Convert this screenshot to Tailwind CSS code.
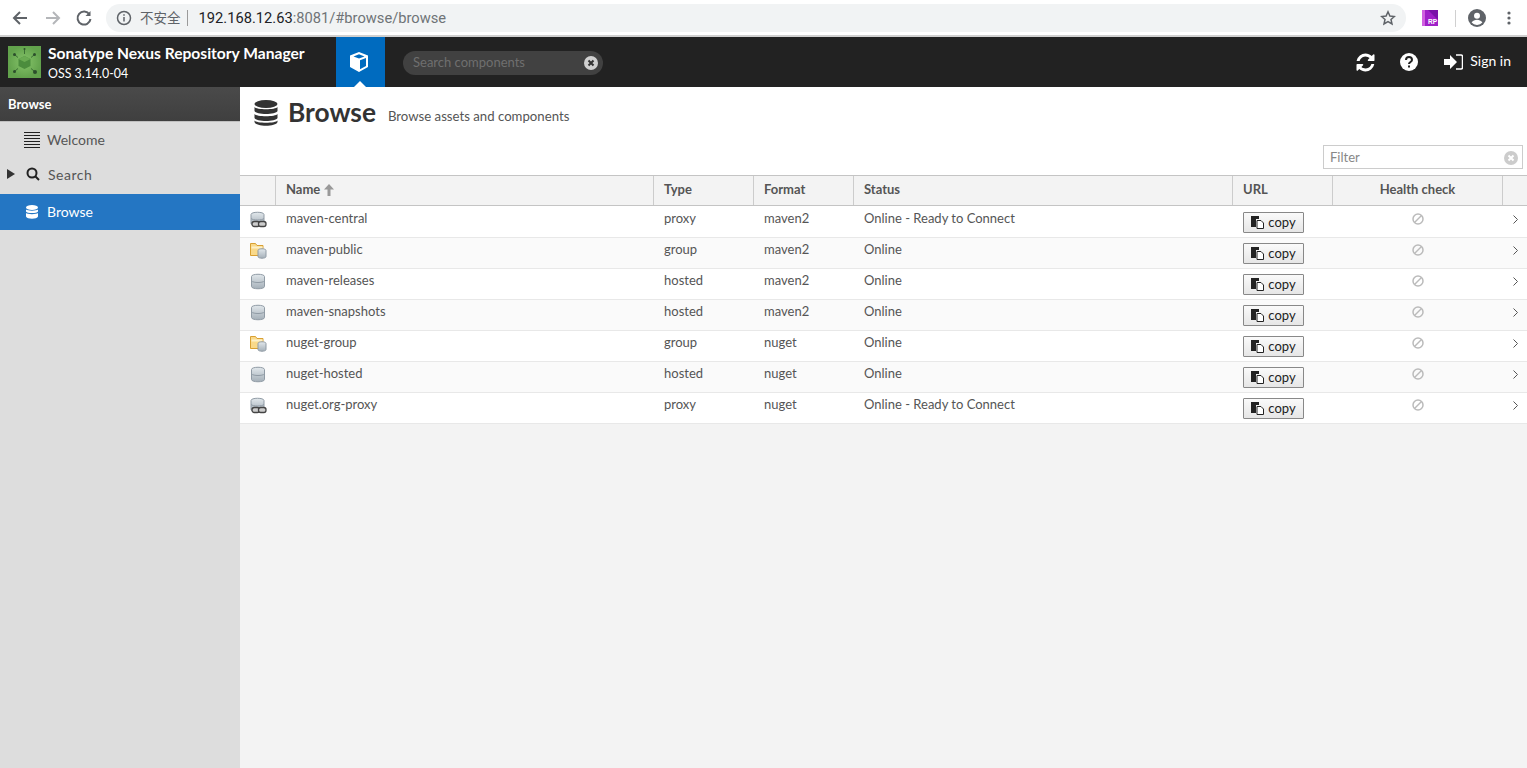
<!DOCTYPE html>
<html lang="en">
<head>
    <meta charset="UTF-8">
    <title>Browse - Nexus Repository Manager</title>
    <script src="https://cdn.jsdelivr.net/npm/@tailwindcss/browser@4"></script>
</head>
<body class="h-[768px] w-[1527px] overflow-hidden bg-[#f3f3f3] font-['Lato','Noto_Sans_CJK_SC',sans-serif] text-[13px] text-[#555]">

    <!-- browser toolbar -->
    <div class="flex h-[37px] items-center border-b-2 border-[#d0d0d0] bg-white pt-[1px]">
        <div class="flex w-[106px] items-center pl-[11px]">
            <svg class="h-[18px] w-[18px]" viewBox="0 0 18 18" fill="none" stroke="#5f6368" stroke-width="2"><path d="M16 9H3M9 3L3 9l6 6"/></svg>
            <svg class="ml-[15px] h-[18px] w-[18px]" viewBox="0 0 18 18" fill="none" stroke="#b4b6b9" stroke-width="2"><path d="M2 9h13M9 3l6 6-6 6"/></svg>
            <svg class="ml-[13px] h-[18px] w-[18px]" viewBox="0 0 18 18" fill="none" stroke="#5f6368" stroke-width="2"><path d="M14.5 5.5A6.5 6.5 0 1 0 15.5 10"/><path d="M15.5 2v5h-5" fill="#5f6368" stroke="none"/></svg>
        </div>
        <div class="flex h-[28px] w-[1300px] items-center rounded-full bg-[#f1f3f4] pl-[10px] pr-[10px] text-[14.7px]">
            <svg class="h-[16px] w-[16px]" viewBox="0 0 16 16" fill="none" stroke="#5f6368" stroke-width="1.5"><circle cx="8" cy="8" r="6.5"/><path d="M8 7v4.500M8 4.200v1.600"/></svg>
            <span class="ml-[8px] text-[13.5px] text-[#5f6368]">不安全</span>
            <span class="mx-[6px] h-[16px] w-px bg-[#9a9a9a]"></span>
            <span class="ml-[5px] font-['Roboto',sans-serif] text-[#202124]">192.168.12.63<span class="text-[#6f7377]">:8081/#browse/browse</span></span>
            <svg class="ml-auto h-[16px] w-[16px]" viewBox="0 0 16 16" fill="none" stroke="#5f6368" stroke-width="1.5"><path d="M8 1.800l1.900 4.200 4.500.5-3.400 3 1 4.500L8 11.700 4 14l1-4.500-3.400-3 4.500-.5z"/></svg>
        </div>
        <svg class="ml-[16px] h-[16px] w-[16px]" viewBox="0 0 16 16"><rect width="16" height="16" fill="#a020c8"/><rect width="3" height="16" fill="#d060e0"/><path d="M6 0h10v10z" fill="#7a12a8"/><text x="6" y="14" font-size="6.5" font-family="Liberation Sans" font-weight="bold" fill="#fff">RP</text></svg>
        <span class="ml-[17px] h-[17px] w-px bg-[#d0d0d0]"></span>
        <svg class="ml-[12px] h-[18px] w-[18px]" viewBox="0 0 18 18"><circle cx="9" cy="9" r="9" fill="#5f6368"/><circle cx="9" cy="6.800" r="3" fill="#fff"/><path d="M3.600 13.600c1.200-2 3.400-2.800 5.400-2.800s4.200.8 5.400 2.800A7 7 0 0 1 9 16a7 7 0 0 1-5.400-2.400z" fill="#fff"/></svg>
        <svg class="ml-[21px] h-[14px] w-[4px]" viewBox="0 0 4 14" fill="#5f6368"><circle cx="2" cy="2" r="1.600"/><circle cx="2" cy="7" r="1.600"/><circle cx="2" cy="12" r="1.600"/></svg>
    </div>

    <!-- nexus header -->
    <header class="flex h-[50px] items-center bg-[#222] text-white">
        <svg class="ml-[8px] h-[32px] w-[33px]" viewBox="0 0 33 32">
            <defs><radialGradient id="logoBg"><stop offset="0" stop-color="#86c46a"/><stop offset="1" stop-color="#62a24c"/></radialGradient></defs>
            <rect width="33" height="32" fill="url(#logoBg)"/>
            <path d="M16.500 10l6 3v7l-6 3-6-3v-7z" fill="#4b8c3d"/>
            <path d="M16.500 10l6 3-6 3-6-3z" fill="#6aab52"/>
            <path d="M16.500 4v4M7 9l3 2.500M26 9l-3 2.500M7 25l3-2.500M26 25l-3-2.500" stroke="#3c6f35"/>
            <circle cx="6.500" cy="8.500" r="1.500" fill="#2c4f2c"/><circle cx="26.500" cy="8.500" r="1.500" fill="#2c4f2c"/><circle cx="6.500" cy="25.500" r="1.500" fill="#2c4f2c"/><circle cx="27" cy="26" r="2" fill="#2c4f2c"/><circle cx="16.500" cy="3" r="1" fill="#2c4f2c"/>
        </svg>
        <div class="ml-[7px] w-[288px]">
            <div class="text-[15.600px] leading-[18px] font-bold">Sonatype Nexus Repository Manager</div>
            <div class="mt-[4px] text-[12.400px] leading-[15px]">OSS 3.14.0-04</div>
        </div>
        <div class="relative flex h-[50px] w-[49px] items-center justify-center bg-[#006bbf] pr-[3px]">
            <svg class="h-[20px] w-[20px]" viewBox="0 0 20 20" fill="#fff"><path d="M10 0l9 3.500v11.500l-9 5-9-5V3.500zM10 2.300L4.500 4.400 10 6.600l5.500-2.200zM11 8.300v9l6-3.300V6z" fill-rule="evenodd"/></svg>
            <div class="absolute bottom-0 left-[18px] h-0 w-0 border-x-[6px] border-b-[6px] border-x-transparent border-b-white"></div>
        </div>
        <div class="mt-[1px] ml-[18px] flex h-[24px] w-[200px] items-center rounded-full bg-[#414141] pl-[10px] pr-[5px]">
            <span class="text-[13px] text-[#6f6f6f]">Search components</span>
            <svg class="ml-auto h-[14px] w-[14px]" viewBox="0 0 14 14"><circle cx="7" cy="7" r="7" fill="#d0d0d0"/><path d="M4.500 4.500l5 5M9.500 4.500l-5 5" stroke="#333" stroke-width="2"/></svg>
        </div>
        <svg class="ml-auto h-[21px] w-[21px]" viewBox="0 0 1792 1792" fill="#fff"><path d="M1639 1056q0 5-1 7-64 268-268 434.500t-478 166.500q-146 0-282.500-55t-243.500-157l-129 129q-19 19-45 19t-45-19-19-45v-448q0-26 19-45t45-19h448q26 0 45 19t19 45-19 45l-137 137q71 66 161 102t187 36q134 0 250-65t186-179q11-17 53-117 8-23 30-23h192q13 0 22.500 9.500t9.500 22.500zm25-800v448q0 26-19 45t-45 19h-448q-26 0-45-19t-19-45 19-45l138-138q-148-137-349-137-134 0-250 65t-186 179q-11 17-53 117-8 23-30 23h-199q-13 0-22.500-9.500t-9.500-22.500v-7q65-268 270-434.500t480-166.500q146 0 284 55.500t245 156.500l130-129q19-19 45-19t45 19 19 45z"/></svg>
        <svg class="ml-[24px] h-[18px] w-[18px]" viewBox="0 0 18 18"><circle cx="9" cy="9" r="9" fill="#fff"/><path d="M6 7c0-4 6-4 6 0 0 2-3 2-3 4" fill="none" stroke="#222" stroke-width="2"/><rect x="8" y="12.500" width="2" height="2" fill="#222"/></svg>
        <svg class="ml-[26px] h-[16px] w-[19px]" viewBox="0 0 19 16" fill="#fff"><path d="M0 5h6V1l7 7-7 7v-4H0z"/><path d="M12 1h5a1.500 1.500 0 0 1 1.500 1.500v11A1.500 1.500 0 0 1 17 15h-5" fill="none" stroke="#fff" stroke-width="1.500"/></svg>
        <span class="mr-[16px] mb-[4px] ml-[7px] text-[14px]">Sign in</span>
    </header>

    <div class="flex h-[681px]">
        <!-- sidebar -->
        <aside class="w-[240px] shrink-0 bg-[#dddddd]">
            <div class="flex h-[35px] items-center border-b border-[#c0c0c0] bg-[linear-gradient(#4a4a4a,#3f3f3f)] pt-[2px] pl-[8px] text-[13px] font-bold text-white">Browse</div>
            <div class="flex h-[36px] items-center pl-[24px] text-[14px] text-[#555]">
                <svg class="h-[16px] w-[16px]" viewBox="0 0 16 16" stroke="#222" stroke-width="1"><path d="M0 .5h16M0 3.500h16M0 6.500h16M0 9.500h16M0 12.500h16M0 15.500h16"/></svg>
                <span class="mb-[2px] ml-[7px]">Welcome</span>
            </div>
            <div class="flex h-[36px] items-center pb-[4px] pl-[7px] text-[14px] text-[#555]">
                <svg class="h-[10px] w-[8px]" viewBox="0 0 8 10" fill="#333"><path d="M0 0l8 5-8 5z"/></svg>
                <svg class="ml-[11px] h-[14px] w-[14px]" viewBox="0 0 14 14" fill="none" stroke="#222" stroke-width="2"><circle cx="6" cy="6" r="4.500"/><path d="M9.500 9.500l3.500 3.500"/></svg>
                <span class="ml-[8px] tracking-[0.5px]">Search</span>
            </div>
            <div class="flex h-[36px] items-center bg-[#2476c3] pl-[25px] text-[14px] text-white">
                <svg class="h-[14px] w-[14px]" viewBox="0 0 14 14" fill="#fff"><ellipse cx="7" cy="2.500" rx="6" ry="2.500"/><path d="M1 4.500c1 1.500 11 1.500 12 0v2c-1 2-11 2-12 0zM1 8c1 1.500 11 1.500 12 0v3.500c-1 3-11 3-12 0z"/></svg>
                <span class="mb-[2px] ml-[8px]">Browse</span>
            </div>
        </aside>

        <!-- main -->
        <main class="flex-1">
            <div class="h-[88px] bg-white">
                <div class="flex h-[51px] items-center pl-[14px]">
                    <svg class="h-[26px] w-[24px]" viewBox="0 0 24 26" fill="#333"><ellipse cx="12" cy="4" rx="11.500" ry="4"/><path d="M.5 7c1.500 3 21.500 3 23 0v4c-1.500 4-21.500 4-23 0zM.5 14c1.500 3 21.500 3 23 0v4c-1.500 4-21.500 4-23 0zM.5 20.500c1.500 3 21.500 3 23 0V22c-1.500 5-21.500 5-23 0z"/></svg>
                    <span class="ml-[10px] text-[26.300px] font-bold text-[#333]">Browse</span>
                    <span class="mt-[9px] ml-[12px] text-[13.200px] text-[#555]">Browse assets and components</span>
                </div>
                <div class="mt-[7px] flex justify-end pr-[4px]">
                    <div class="flex h-[24px] w-[200px] items-center border border-[#ccc] bg-white pt-[2px] pl-[6px] pr-[4px] text-[#888]">
                        <span>Filter</span>
                        <svg class="ml-auto h-[14px] w-[14px]" viewBox="0 0 14 14"><circle cx="7" cy="7" r="7" fill="#ccc"/><path d="M4.500 4.500l5 5M9.500 4.500l-5 5" stroke="#fff" stroke-width="2"/></svg>
                    </div>
                </div>
            </div>

            <div class="grid h-[31px] grid-cols-[36px_378px_100px_100px_379px_100px_170px_24px] border-y border-[#c4c4c4] bg-[#f3f3f3] text-[13px] font-bold text-[#555]">
                <div class="border-r border-[#ccc]"></div>
                <div class="flex items-center gap-[4px] border-r border-[#ccc] pb-[2px] pl-[10px]">Name
                    <svg class="h-[12px] w-[10px]" viewBox="0 0 10 12" fill="#999"><path d="M5 0l5 5.500H6.500V12h-3V5.500H0z"/></svg>
                </div>
                <div class="flex items-center border-r border-[#ccc] pb-[2px] pl-[10px]">Type</div>
                <div class="flex items-center border-r border-[#ccc] pb-[2px] pl-[10px]">Format</div>
                <div class="flex items-center border-r border-[#ccc] pb-[2px] pl-[10px]">Status</div>
                <div class="flex items-center border-r border-[#ccc] pb-[2px] pl-[10px]">URL</div>
                <div class="flex items-center justify-center border-r border-[#ccc] pb-[2px]">Health check</div>
            </div>
            <div id="repoRows" class="bg-white pt-[1px]"></div>
        </main>
    </div>

    <script>
        const cyl = `<linearGradient id="cyl" x1="0" x2="0" y1="0" y2="1"><stop offset="0" stop-color="#e2e8ec"/><stop offset="1" stop-color="#a4afb8"/></linearGradient>`;
        const hosted = `<svg class="h-[17px] w-[16px]" viewBox="0 0 16 17"><path d="M1.500 3.500C1.500.5 14.500.5 14.500 3.500v10c0 3-13 3-13 0z" fill="url(#cyl)" stroke="#909ba5"/><path d="M1.500 8c2 2 11 2 13 0" fill="none" stroke="#909ba5"/></svg>`;
        const proxy = `<svg class="h-[17px] w-[17px]" viewBox="0 0 17 17"><defs>${cyl}</defs><path d="M1 3.500C1 .5 14 .5 14 3.500v9c0 2.500-13 2.500-13 0z" fill="url(#cyl)" stroke="#909ba5"/><path d="M1 7.500c2 2 11 2 13 0" fill="none" stroke="#909ba5"/><rect x="2" y="10.500" width="7.500" height="5" rx="2.200" fill="#ccc" stroke="#444" stroke-width="1.300"/><rect x="8.500" y="10.500" width="7.500" height="5" rx="2.200" fill="#ccc" stroke="#444" stroke-width="1.300"/></svg>`;
        const group = `<svg class="h-[17px] w-[17px]" viewBox="0 0 17 17"><path d="M.5 1.500h5l1.500 2h6v10H.5z" fill="#f9d98a" stroke="#d9a032"/><path d="M1.500 5.500h11" stroke="#fdf0c8" stroke-width="2"/><path d="M8 8.500c0-2.300 8-2.300 8 0v6c0 2.300-8 2.300-8 0z" fill="url(#cyl)" stroke="#909ba5"/></svg>`;
        const icons = { proxy, group, hosted };
        const repos = [
            ["maven-central", "proxy", "maven2", "Online - Ready to Connect"],
            ["maven-public", "group", "maven2", "Online"],
            ["maven-releases", "hosted", "maven2", "Online"],
            ["maven-snapshots", "hosted", "maven2", "Online"],
            ["nuget-group", "group", "nuget", "Online"],
            ["nuget-hosted", "hosted", "nuget", "Online"],
            ["nuget.org-proxy", "proxy", "nuget", "Online - Ready to Connect"]
        ];
        const tabla = document.getElementById("repoRows");
        repos.forEach((repo, i) => {
            const fila = document.createElement("div");
            fila.className = "grid h-[31px] grid-cols-[36px_378px_100px_100px_379px_100px_170px_24px] border-b border-[#e8e8e8] " + (i % 2 ? "bg-[#fafafa]" : "bg-white");
            fila.innerHTML = `
                <div class="pt-[4px] pl-[10px]">${icons[repo[1]]}</div>
                <div class="pt-[2px] pl-[10px]">${repo[0]}</div>
                <div class="pt-[2px] pl-[10px]">${repo[1]}</div>
                <div class="pt-[2px] pl-[10px]">${repo[2]}</div>
                <div class="pt-[2px] pl-[10px]">${repo[3]}</div>
                <div class="pt-[5px] pl-[10px]">
                    <div class="flex h-[21px] w-[61px] items-center justify-center gap-[4px] rounded-[1px] border border-[#888] bg-[linear-gradient(#fafafa,#e6e6e6)] text-[13px] text-[#222]">
                        <svg class="h-[13px] w-[13px]" viewBox="0 0 13 13"><path d="M0 0h8v3H5v8H0z" fill="#222"/><path d="M6 4.500h4l2.500 2.500v5.500H6z" fill="#fff" stroke="#222"/></svg>copy
                    </div>
                </div>
                <div class="flex justify-center pt-[6px]">
                    <svg class="h-[12px] w-[12px]" viewBox="0 0 12 12" fill="none" stroke="#bbb" stroke-width="1.500"><circle cx="6" cy="6" r="5"/><path d="M2.500 9.500l7-7"/></svg>
                </div>
                <div class="flex justify-center pt-[8px]">
                    <svg class="h-[9px] w-[5px]" viewBox="0 0 5 9" fill="none" stroke="#555"><path d="M.5.500l4 4-4 4"/></svg>
                </div>`;
            tabla.appendChild(fila);
        });
    </script>

</body>
</html>
